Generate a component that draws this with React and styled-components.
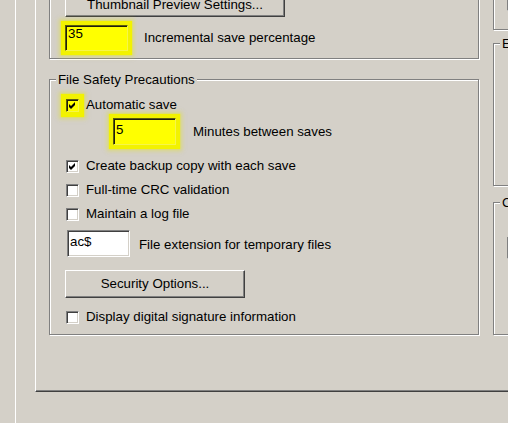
import React from 'react';
import styled, { createGlobalStyle, css } from 'styled-components';

const GlobalStyle = createGlobalStyle`
  html, body {
    margin: 0;
    padding: 0;
    background: #d4d0c8;
  }
  body {
    font-family: "Liberation Sans", Arial, sans-serif;
    font-size: 13.3px;
    color: #000;
  }
`;

const Window = styled.div`
  width: 508px;
  height: 423px;
  overflow: hidden;
  box-sizing: border-box;
  padding-left: 15px;
  background: #d4d0c8;
`;

// the dialog's inner frame: a white line down the left
const Frame = styled.div`
  height: 100%;
  box-sizing: border-box;
  border-left: 1px solid #fff;
  padding-left: 19px;
  display: flex;
  flex-direction: column;
  align-items: flex-start;
`;

// tab page, its top lies above the window
const TabPanel = styled.div`
  margin-top: -30px;
  height: 422px;
  width: 640px;
  flex: none;
  box-sizing: border-box;
  border-left: 1px solid #fff;
  border-bottom: 1px solid #404040;
  box-shadow: inset 0 -1px 0 #808080;
  padding: 6px 0 0 13px;
  display: flex;
  gap: 14px;
  align-items: flex-start;
`;

const Column = styled.div`
  display: flex;
  flex-direction: column;
  width: ${p => p.$w}px;
  flex: none;
`;

const etched = css`
  border: 1px solid #808080;
  box-shadow: 1px 1px 0 #fff, inset 1px 1px 0 #fff;
`;

const Box = styled.div`
  ${etched};
  box-sizing: border-box;
  height: ${p => (p.$h ? `${p.$h}px` : 'auto')};
  padding: ${p => p.$pad || '0'};
`;

const Group = styled.fieldset`
  ${etched};
  margin: ${p => p.$mt || 0}px 0 0 0;
  padding: 0;
  min-width: 0;
  box-sizing: border-box;
  height: ${p => (p.$h ? `${p.$h}px` : 'auto')};
`;

const Legend = styled.legend`
  margin-left: 6px;
  padding: 0 2px;
  line-height: 15px;
  background: #d4d0c8;
`;

const GroupBody = styled.div`
  display: flex;
  flex-direction: column;
  align-items: flex-start;
  padding: ${p => p.$pad};
`;

const Button = styled.button`
  width: ${p => p.$w}px;
  height: ${p => p.$h}px;
  margin-top: ${p => p.$mt || 0}px;
  box-sizing: border-box;
  padding: 0;
  font: inherit;
  color: #000;
  background: #d4d0c8;
  border: 1px solid;
  border-color: #fff #404040 #404040 #fff;
  box-shadow: inset -1px -1px 0 #808080;
  text-align: center;
  line-height: ${p => p.$h - 4}px;
`;

const Row = styled.div`
  display: flex;
  align-items: center;
  gap: ${p => p.$gap}px;
  margin-top: ${p => p.$mt || 0}px;
  padding-left: ${p => p.$indent || 0}px;
`;

const highlight = css`
  background: #ffff00;
  border-color: #5a5a10 #f6f64a #f6f64a #5a5a10;
`;

const TextBox = styled.div`
  width: ${p => p.$w || 63}px;
  height: ${p => p.$h || 26}px;
  box-sizing: border-box;
  flex: none;
  padding: ${p => (p.$pt === undefined ? 3 : p.$pt)}px 2px 0;
  line-height: 16px;
  border: 1px solid;
  border-color: #808080 #fff #fff #808080;
  box-shadow: inset 1px 1px 0 #404040, inset -1px -1px 0 #d4d0c8;
  background: #fff;
  ${p =>
    p.$hl &&
    css`
      ${highlight};
      box-shadow: inset 1px 1px 0 #20200a, 0 0 1px 4px #f2f200,
        0 0 4px 6px rgba(226, 226, 50, 0.5);
    `}
`;

const CheckRow = styled.div`
  display: flex;
  align-items: center;
  gap: 7px;
  height: 16px;
  margin-top: ${p => p.$mt || 0}px;
  margin-left: 1px;
`;

const CheckBox = styled.span`
  width: 13px;
  height: 13px;
  box-sizing: border-box;
  flex: none;
  display: flex;
  align-items: center;
  justify-content: center;
  border: 1px solid;
  border-color: #808080 #fff #fff #808080;
  box-shadow: inset 1px 1px 0 #404040, inset -1px -1px 0 #d4d0c8;
  background: #fff;
  ${p =>
    p.$hl &&
    css`
      ${highlight};
      box-shadow: inset 1px 1px 0 #20200a, 0 0 1px 5px #f2f200,
        0 0 4px 7px rgba(226, 226, 50, 0.5);
    `}
`;

const Label = styled.span`
  white-space: nowrap;
  line-height: 16px;
  padding-top: ${p => p.$drop || 0}px;
`;

const Tick = () => (
  <svg width="7" height="7" viewBox="0 0 7 7">
    <path d="M0 2 L2 4 L6 0 L6 3 L2 7 L0 5 Z" fill="#000" />
  </svg>
);

const Check = ({ checked, hl, children, mt }) => (
  <CheckRow $mt={mt}>
    <CheckBox $hl={hl}>{checked && <Tick />}</CheckBox>
    <Label>{children}</Label>
  </CheckRow>
);

export default function App() {
  return (
    <>
      <GlobalStyle />
      <Window>
        <Frame>
          <TabPanel>
            <Column $w={430}>
              <Box $pad="16px 0 7px 15px">
                <Button $w={220} $h={24}>Thumbnail Preview Settings...</Button>
                <Row $gap={16} $mt={8}>
                  <TextBox $hl $pt={0}>35</TextBox>
                  <Label>Incremental save percentage</Label>
                </Row>
              </Box>

              <Group $mt={13}>
                <Legend>File Safety Precautions</Legend>
                <GroupBody $pad="10px 0 9px 15px">
                  <Check checked hl>Automatic save</Check>
                  <Row $gap={17} $mt={5} $indent={48}>
                    <TextBox $hl $h={27}>5</TextBox>
                    <Label>Minutes between saves</Label>
                  </Row>
                  <Check checked mt={13}>Create backup copy with each save</Check>
                  <Check mt={8}>Full-time CRC validation</Check>
                  <Check mt={8}>Maintain a log file</Check>
                  <Row $gap={9} $mt={8} $indent={2}>
                    <TextBox $h={27}>ac$</TextBox>
                    <Label $drop={2}>File extension for temporary files</Label>
                  </Row>
                  <Button $w={180} $h={28} $mt={13}>Security Options...</Button>
                  <Check mt={11}>Display digital signature information</Check>
                </GroupBody>
              </Group>
            </Column>

            <Column $w={140}>
              <Box $h={54} $pad="8px 0 0 13px">
                <TextBox $w={60} />
              </Box>
              <Group $mt={6} $h={150}>
                <Legend>E</Legend>
              </Group>
              <Group $mt={9} $h={140}>
                <Legend>C</Legend>
                <GroupBody $pad="27px 0 0 13px">
                  <TextBox $w={60} $h={22} />
                </GroupBody>
              </Group>
            </Column>
          </TabPanel>
        </Frame>
      </Window>
    </>
  );
}
